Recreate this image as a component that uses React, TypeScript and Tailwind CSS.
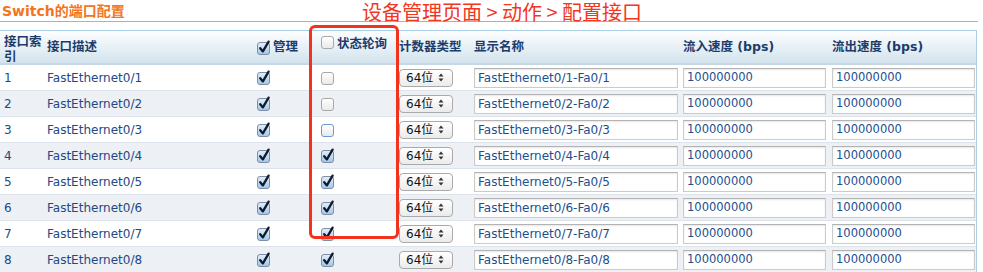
import React from "react";

const FONT = '"DejaVu Sans", "Noto Sans CJK SC", sans-serif';

const rows = [
  { i: 1, poll: false, focus: false },
  { i: 2, poll: false, focus: false },
  { i: 3, poll: false, focus: true },
  { i: 4, poll: true, focus: false },
  { i: 5, poll: true, focus: false },
  { i: 6, poll: true, focus: false },
  { i: 7, poll: true, focus: false },
  { i: 8, poll: true, focus: false },
];

function Check({ checked, focus }: { checked: boolean; focus?: boolean }) {
  return (
    <svg width="14" height="15" viewBox="0 0 14 15" className="block">
      <defs>
        <linearGradient id="cbBlue" x1="0" y1="0" x2="0" y2="1">
          <stop offset="0" stopColor="#e3f0fc" />
          <stop offset="1" stopColor="#9fc6ee" />
        </linearGradient>
        <linearGradient id="cbWhite" x1="0" y1="0" x2="0" y2="1">
          <stop offset="0" stopColor="#ffffff" />
          <stop offset="1" stopColor="#e9e9e9" />
        </linearGradient>
      </defs>
      <rect
        x="0.5"
        y="2.5"
        width="12"
        height="12"
        rx="2.5"
        fill={checked ? "url(#cbBlue)" : "url(#cbWhite)"}
        stroke={checked ? "#7d8ea6" : focus ? "#6b9ad2" : "#a8a8a8"}
      />
      {checked && (
        <path
          d="M3.2 8.2 L5.9 11.4 L11.6 1.6"
          fill="none"
          stroke="#141a26"
          strokeWidth="2.3"
          strokeLinecap="round"
          strokeLinejoin="round"
        />
      )}
    </svg>
  );
}

function Select() {
  return (
    <div className="flex h-[18px] w-[54px] items-center justify-between rounded-[4px] border border-[#aaaaaa] bg-gradient-to-b from-white to-[#ebebeb] pl-[6px] pr-[8px] text-[12px] leading-none text-[#111]">
      <span>64位</span>
      <svg width="6" height="9" viewBox="0 0 6 9">
        <path d="M3 0.5 L5.5 3.5 L0.5 3.5 Z" fill="#333" />
        <path d="M3 8.5 L5.5 5.5 L0.5 5.5 Z" fill="#333" />
      </svg>
    </div>
  );
}

function Field({ value, w }: { value: string; w: string }) {
  return (
    <div
      className={`flex h-[20px] ${w} items-center border border-[#cbcbcb] border-t-[#b3b3b3] bg-white pl-[3px] text-[#1d4e8d] shadow-[inset_0_1px_2px_rgba(0,0,0,0.10)]`}
    >
      {value}
    </div>
  );
}

const GRID = "grid grid-cols-[43px_210px_64px_78px_75px_209px_149px_148px]";

export default function App() {
  return (
    <div className="relative h-[272px] w-[983px] overflow-hidden bg-white" style={{ fontFamily: FONT }}>
      {/* title */}
      <div className="h-[22px] w-[978px] border-b border-[#82bde3] pl-[2px] pt-[3px] text-[14px] font-bold leading-[16px] text-[#f47420]">
        Switch的端口配置
      </div>

      {/* table */}
      <div className="mt-[8px] w-[977px] border-r border-t border-[#a9cfe6] text-[12px]">
        <div
          className={`${GRID} h-[34px] border-b-2 border-b-[#c6d8e5] bg-gradient-to-b from-[#fdfeff] to-[#d3e3ed] text-[12.5px] font-bold text-[#1c3c6c]`}
        >
          <div className="flex items-center pl-[4px] pr-[1px] pt-[3px] leading-[15px]">接口索引</div>
          <div className="flex items-center pl-[4px]">接口描述</div>
          <div className="flex items-center gap-[2px] pl-[4px]">
            <Check checked />
            <span>管理</span>
          </div>
          <div className="flex items-start gap-[2px] pl-[4px] pt-[3px]">
            <Check checked={false} />
            <span className="pt-[1px]">状态轮询</span>
          </div>
          <div className="flex items-center whitespace-nowrap pl-[4px]">计数器类型</div>
          <div className="flex items-center pl-[4px]">显示名称</div>
          <div className="flex items-center pl-[4px]">流入速度 (bps)</div>
          <div className="flex items-center pl-[4px]">流出速度 (bps)</div>
        </div>

        {rows.map((r) => (
          <div
            key={r.i}
            className={`${GRID} h-[26px] border-b border-[#dde3ea] text-[#214985] ${
              r.i % 2 === 0 ? "bg-[#edf0f5]" : "bg-white"
            }`}
          >
            <div className="flex items-center pl-[4px]">{r.i}</div>
            <div className="flex items-center pl-[4px]">FastEthernet0/{r.i}</div>
            <div className="flex items-center pl-[4px]">
              <Check checked />
            </div>
            <div className="flex items-center pl-[4px]">
              <Check checked={r.poll} focus={r.focus} />
            </div>
            <div className="flex items-center pl-[4px]">
              <Select />
            </div>
            <div className="flex items-center pl-[4px]">
              <Field w="w-[204px]" value={`FastEthernet0/${r.i}-Fa0/${r.i}`} />
            </div>
            <div className="flex items-center pl-[4px] text-[11.5px]">
              <Field w="w-[143px]" value="100000000" />
            </div>
            <div className="flex items-center pl-[4px] text-[11.5px]">
              <Field w="w-[143px]" value="100000000" />
            </div>
          </div>
        ))}
      </div>

      {/* annotations */}
      <div
        className="absolute left-[362px] top-[1px] whitespace-nowrap text-[20px] leading-[21px] text-[#f2361f]"
        style={{ fontFamily: '"Noto Sans CJK SC", "DejaVu Sans", sans-serif' }}
      >
        设备管理页面 &gt; 动作 &gt; 配置接口
      </div>
      <div className="absolute left-[309px] top-[25px] h-[214px] w-[90px] rounded-[6px] border-[3px] border-[#f2321c]" />
    </div>
  );
}
